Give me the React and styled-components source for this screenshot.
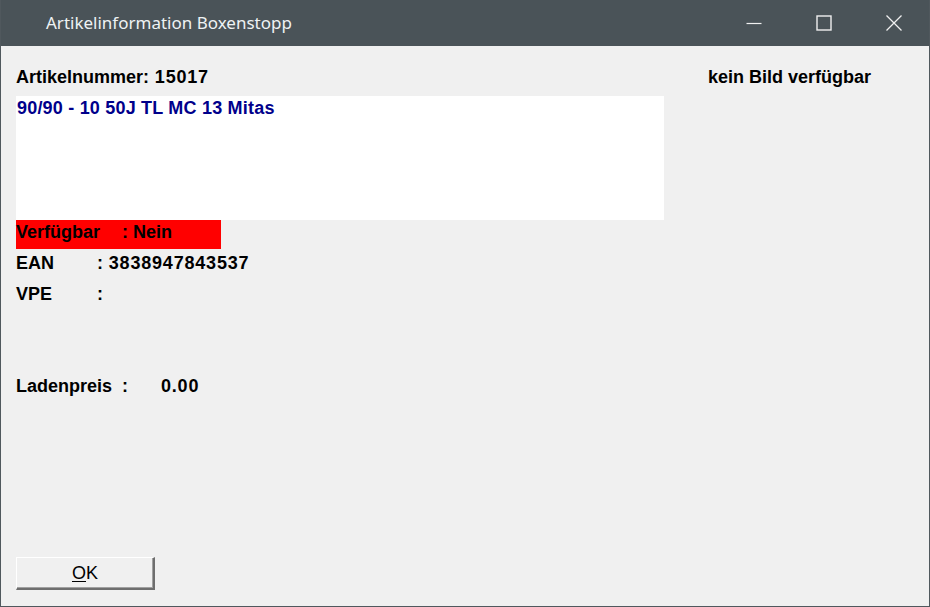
import React from "react";
import styled, { createGlobalStyle } from "styled-components";

const Global = createGlobalStyle`
  html, body { margin: 0; padding: 0; background: #f0f0f0; }
  #root { width: 930px; height: 607px; }
`;

const Window = styled.div`
  width: 930px;
  height: 607px;
  box-sizing: border-box;
  display: flex;
  flex-direction: column;
  border: 1px solid #50585d;
  border-top: none;
  background: #f0f0f0;
`;

const TitleBar = styled.div`
  height: 46px;
  flex: none;
  background: #4a5358;
  display: flex;
  align-items: center;
`;

const Title = styled.div`
  flex: 1;
  padding-left: 45px;
  color: #eef2f4;
  font-family: "Noto Sans", "Open Sans", sans-serif;
  font-size: 17px;
  margin-top: -1px;
`;

const CtrlButton = styled.div`
  width: 70px;
  height: 46px;
  display: flex;
  align-items: center;
  justify-content: center;
`;

const Client = styled.div`
  flex: 1;
  display: flex;
  flex-direction: column;
  padding: 21px 0 16px 15px;
  font-family: "Liberation Sans", Arial, sans-serif;
  font-weight: bold;
  font-size: 18px;
  color: #000;
`;

const Top = styled.div`
  display: flex;
  align-items: flex-start;
`;

const LeftCol = styled.div`
  width: 648px;
  display: flex;
  flex-direction: column;
`;

const NoImage = styled.div`
  margin-left: 44px;
  line-height: 20px;
`;

const Line = styled.div`
  line-height: 20px;
  height: ${(p) => p.$h || 20}px;
  display: flex;
  align-items: ${(p) => (p.$top ? "flex-start" : "center")};
  padding-top: ${(p) => (p.$top ? 2 : 0)}px;
  box-sizing: border-box;
  background: ${(p) => p.$bg || "transparent"};
  width: ${(p) => (p.$w ? p.$w + "px" : "auto")};
  margin-top: ${(p) => p.$mt || 0}px;
`;

const DescBox = styled.div`
  margin-top: 9px;
  height: 124px;
  background: #fff;
  color: #00008b;
  padding: 2px 1px;
  box-sizing: border-box;
  line-height: 20px;
  letter-spacing: 0.2px;
`;

const Num = styled.span`
  letter-spacing: 0.8px;
`;

const Label = styled.span`
  display: inline-block;
  width: ${(p) => p.$w}px;
  flex: none;
`;

const Spacer = styled.div`
  flex: 1;
`;

const OkButton = styled.button`
  width: 139px;
  height: 33px;
  padding: 0;
  background: #f0f0f0;
  border: none;
  border-top: 1px solid #ffffff;
  border-left: 1px solid #ffffff;
  border-right: 2px solid #6e6e6e;
  border-bottom: 2px solid #6e6e6e;
  box-shadow: inset -1px -1px 0 #a0a0a0;
  font-family: "Liberation Sans", Arial, sans-serif;
  font-size: 18px;
  color: #000;
  display: flex;
  align-items: center;
  justify-content: center;
  u { text-underline-offset: 2px; }
`;

export default function App() {
  return (
    <>
      <Global />
      <Window>
        <TitleBar>
          <Title>Artikelinformation Boxenstopp</Title>
          <CtrlButton>
            <svg width="16" height="16" viewBox="0 0 16 16">
              <path d="M0.5 8.5 H15.5" stroke="#f0f0f0" strokeWidth="1.2" />
            </svg>
          </CtrlButton>
          <CtrlButton>
            <svg width="16" height="16" viewBox="0 0 16 16">
              <rect x="1" y="1" width="14" height="14" fill="none" stroke="#f0f0f0" strokeWidth="1.4" />
            </svg>
          </CtrlButton>
          <CtrlButton>
            <svg width="16" height="16" viewBox="0 0 16 16">
              <path d="M0.5 0.5 L15.5 15.5 M15.5 0.5 L0.5 15.5" stroke="#f0f0f0" strokeWidth="1.3" />
            </svg>
          </CtrlButton>
        </TitleBar>
        <Client>
          <Top>
            <LeftCol>
              <Line>Artikelnummer: <Num>&nbsp;15017</Num></Line>
              <DescBox>90/90 - 10 50J TL MC 13 Mitas</DescBox>
              <Line $h={29} $bg="#ff0000" $w={205} $top>
                <Label $w={106}>Verfügbar</Label>: Nein
              </Line>
              <Line $h={20} $mt={4}>
                <Label $w={81}>EAN</Label>: <Num>&nbsp;3838947843537</Num>
              </Line>
              <Line $h={20} $mt={11}>
                <Label $w={81}>VPE</Label>:
              </Line>
              <Line $h={20} $mt={72}>
                <Label $w={145}>Ladenpreis&nbsp; :</Label><Num>0.00</Num>
              </Line>
            </LeftCol>
            <NoImage>kein Bild verfügbar</NoImage>
          </Top>
          <Spacer />
          <OkButton>
            <span><u>O</u>K</span>
          </OkButton>
        </Client>
      </Window>
    </>
  );
}
